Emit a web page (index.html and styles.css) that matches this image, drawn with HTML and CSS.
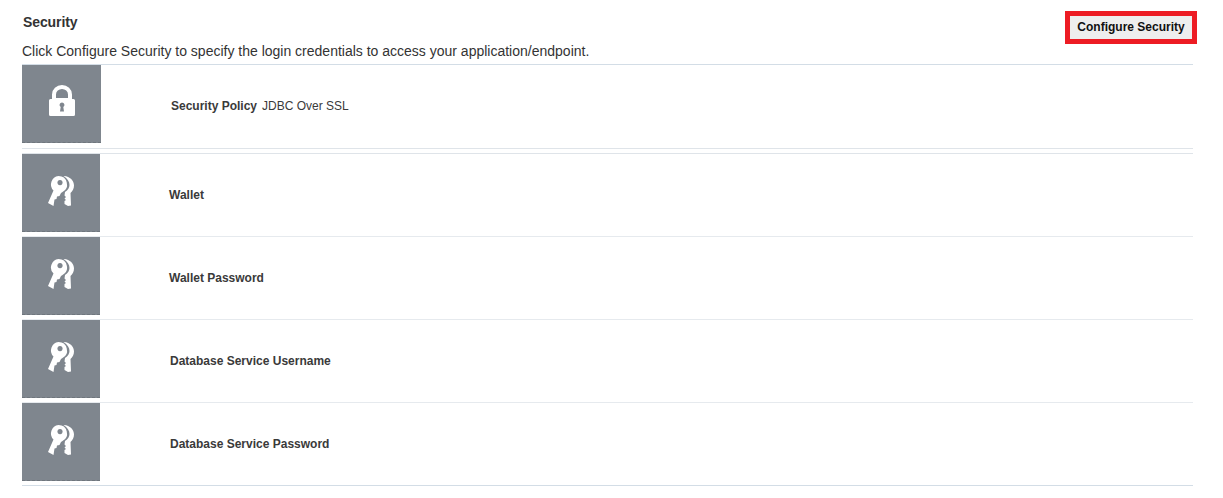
FILE: index.html
```html
<!DOCTYPE html>
<html lang="en">
<head>
<meta charset="utf-8">
<title>Security</title>
<link rel="stylesheet" href="styles.css">
</head>
<body>
<main class="panel">
  <header class="head">
    <div class="head-text">
      <h2 class="title">Security</h2>
      <p class="desc">Click Configure Security to specify the login credentials to access your application/endpoint.</p>
    </div>
    <button class="cfg" type="button">Configure Security</button>
  </header>
  <section class="group first">
    <div class="row policy">
      <div class="tile wide">
        <svg class="ico lock" width="26" height="31" viewBox="0 0 26 31"><path fill="#fff" fill-rule="evenodd" d="M3 14V9.500a10 9.500 0 0 1 20 0V14H24.500A1.500 1.500 0 0 1 26 15.500V29.500A1.500 1.500 0 0 1 24.500 31H1.500A1.500 1.500 0 0 1 0 29.500V15.500A1.500 1.500 0 0 1 1.500 14ZM7 13H19V9.500a6 5.500 0 0 0-12 0ZM13 17.500a2.500 2.500 0 0 0-1.300 4.600L11 26.500h4l-.7-4.400A2.500 2.500 0 0 0 13 17.500Z"/></svg>
      </div>
      <span class="lbl l-policy">Security Policy</span><span class="val">JDBC Over SSL</span>
    </div>
  </section>
  <section class="group">
    <div class="row">
      <div class="tile"><svg class="ico" width="26" height="30" viewBox="0 0 26 30"><use href="#keys"/></svg></div>
      <span class="lbl l-w">Wallet</span>
    </div>
    <div class="row">
      <div class="tile"><svg class="ico" width="26" height="30" viewBox="0 0 26 30"><use href="#keys"/></svg></div>
      <span class="lbl l-w">Wallet Password</span>
    </div>
    <div class="row">
      <div class="tile"><svg class="ico" width="26" height="30" viewBox="0 0 26 30"><use href="#keys"/></svg></div>
      <span class="lbl l-d">Database Service Username</span>
    </div>
    <div class="row">
      <div class="tile"><svg class="ico" width="26" height="30" viewBox="0 0 26 30"><use href="#keys"/></svg></div>
      <span class="lbl l-d">Database Service Password</span>
    </div>
  </section>
</main>
<svg class="defs" width="0" height="0" aria-hidden="true">
  <symbol id="keys" viewBox="0 0 26 30">
    <path fill="#fff" fill-rule="evenodd" d="M10.500 0a8.500 8.500 0 0 1 4 16L13 17l-1.500 3-2.500.5L8.500 23l-2 .5L5.500 30 0 27 5.500 14.500A8.500 8.500 0 0 1 10.500 0ZM12 4a2.600 2.600 0 1 0 .01 0Z"/>
    <path fill="#fff" d="M16 0c6 .5 10 4.500 10 9.500 0 3-1.500 5.500-3.500 7.500L23 29.500l-3 .5-3.500-2v-3l1.500-1-1.500-1.500 1.500-1.500-1.500-1.500.5-3.500c3-2 4.500-4.500 4.500-7 0-3.500-2-6.500-6-9Z"/>
  </symbol>
</svg>
</body>
</html>
```
FILE: styles.css
```css
html, body { margin: 0; padding: 0; background: #fff; }
body { width: 1223px; height: 498px; overflow: hidden; font-family: "Liberation Sans", Arial, sans-serif; color: #333; }
.panel { margin-left: 22px; width: 1171px; padding-top: 11px; }
.head { display: flex; justify-content: space-between; height: 54px; box-sizing: border-box; border-bottom: 1px solid #d3dde6; position: relative; }
.head-text { padding-top: 3px; }
.title { margin: 0 0 0 1px; font-size: 14px; letter-spacing: -.1px; line-height: 16px; font-weight: 700; color: #333; }
.desc { margin: 13px 0 0; font-size: 14px; line-height: 16px; color: #333; }
.cfg { position: absolute; right: -4px; top: 0; width: 132px; height: 33px; box-sizing: border-box; border: 5px solid #ed1c24; background: #eeeeee; font: 700 12px/14px "Liberation Sans", Arial, sans-serif; color: #111; padding: 0 0 2px; }
.group { border-top: 1px solid #dfe4e9; }
.group.first { border-top: 0; height: 83px; border-bottom: 1px solid #dfe4e9; margin-bottom: 4px; }
.row { display: flex; align-items: center; height: 83px; box-sizing: border-box; border-bottom: 1px solid #e6eaee; font-size: 12px; }
.row:last-child { border-bottom-color: #d3dde6; }
.row.policy { border-bottom: 0; align-items: flex-start; }
.tile { width: 78px; height: 78px; flex: none; background: #7f868e; display: flex; align-items: center; justify-content: center; border-bottom: 1px dashed #6f767d; box-sizing: border-box; align-self: flex-start; }
.tile.wide { width: 79px; }
.ico { margin-bottom: 3px; }
.ico.lock { margin-bottom: 7px; }
.lbl { font-weight: 700; color: #3a3a3a; }
.policy .lbl, .policy .val { margin-top: 34px; }
.l-policy { margin-left: 70px; }
.l-w { margin-left: 69px; }
.l-d { margin-left: 70px; }
.val { margin-left: 5px; color: #3a3a3a; }
.defs { position: absolute; }
```
